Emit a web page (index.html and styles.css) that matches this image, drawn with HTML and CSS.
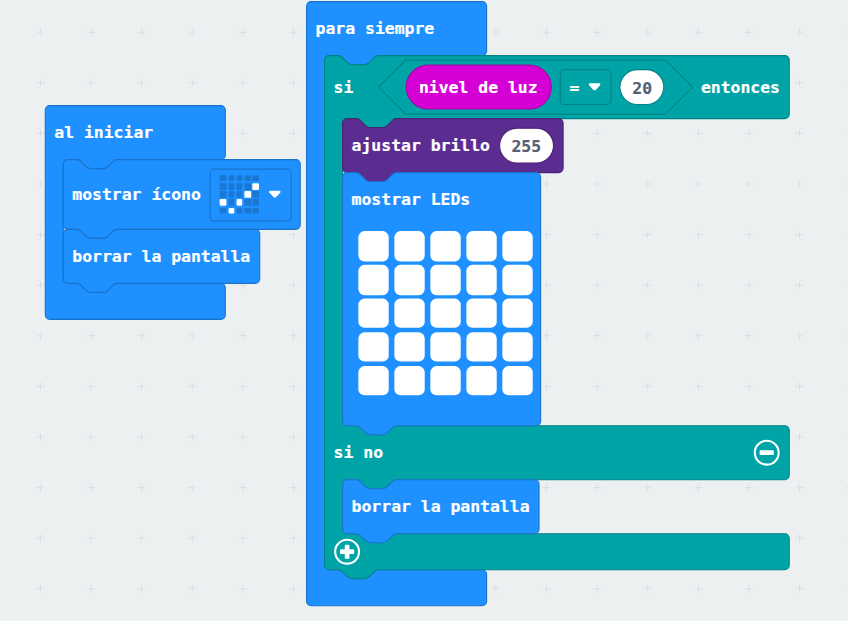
FILE: index.html
```
<!DOCTYPE html>
<html lang="es">
<head>
<meta charset="utf-8">
<title>Bloques</title>
<link rel="stylesheet" href="styles.css">
</head>
<body>
<main class="workspace">
  <svg class="grid" width="848" height="621" aria-hidden="true">
    <defs>
      <pattern id="cross" x="15.2" y="6.9" width="50.6" height="50.6" patternUnits="userSpaceOnUse">
        <path d="M21.3 25.3h8M25.3 21.3v8" stroke="#dcdfe1" stroke-width="1"/>
      </pattern>
    </defs>
    <rect width="848" height="621" fill="url(#cross)"/>
  </svg>

  <section class="script on-start">
    <div class="block blue hat">
      <svg class="shape" width="160" height="190"><path d="M0 4a4 4 0 0 1 4-4H156a4 4 0 0 1 4 4V44a4 4 0 0 1-4 4H64c-2 0-3 1-4 2l-4 4c-1 1-2 2-4 2h-12c-2 0-3-1-4-2l-4-4c-1-1-2-2-4-2h-8a4 4 0 0 0-4 4V154a4 4 0 0 0 4 4H156a4 4 0 0 1 4 4V186a4 4 0 0 1-4 4H4a4 4 0 0 1-4-4z"/></svg>
      <div class="row"><span>al iniciar</span></div>
      <div class="slot">
        <div class="block blue show-icon">
          <svg class="shape" width="211" height="70"><path d="M0 4a4 4 0 0 1 4-4h8c2 0 3 1 4 2l4 4c1 1 2 2 4 2h12c2 0 3-1 4-2l4-4c1-1 2-2 4-2H206.6a4 4 0 0 1 4 4V58a4 4 0 0 1-4 4H48c-2 0-3 1-4 2l-4 4c-1 1-2 2-4 2h-12c-2 0-3-1-4-2l-4-4c-1-1-2-2-4-2h-8a4 4 0 0 1-4-4z"/></svg>
          <div class="row icon-row">
            <span>mostrar ícono</span>
            <div class="dropdown icon-field">
              <div class="mini">
                <i></i><i></i><i></i><i></i><i></i>
                <i></i><i></i><i></i><i></i><i class="on"></i>
                <i></i><i></i><i></i><i class="on"></i><i></i>
                <i class="on"></i><i></i><i class="on"></i><i></i><i></i>
                <i></i><i class="on"></i><i></i><i></i><i></i>
              </div>
              <svg class="arrow" width="12" height="8" viewBox="0 0 12 8"><path d="M1.9.6h8.2c1 0 1.4 1 .7 1.8L7.4 6.1c-.9 1-1.9 1-2.8 0L1.2 2.4C.5 1.6.9.6 1.9.6z"/></svg>
            </div>
          </div>
        </div>
        <div class="block blue">
          <svg class="shape" width="175" height="56"><path d="M0 4a4 4 0 0 1 4-4h8c2 0 3 1 4 2l4 4c1 1 2 2 4 2h12c2 0 3-1 4-2l4-4c1-1 2-2 4-2H170.6a4 4 0 0 1 4 4V44a4 4 0 0 1-4 4H48c-2 0-3 1-4 2l-4 4c-1 1-2 2-4 2h-12c-2 0-3-1-4-2l-4-4c-1-1-2-2-4-2h-8a4 4 0 0 1-4-4z"/></svg>
          <div class="row"><span>borrar la pantalla</span></div>
        </div>
      </div>
      <div class="base"></div>
    </div>
  </section>

  <section class="script forever">
    <div class="block blue hat">
      <svg class="shape" width="160" height="537"><path d="M0 4a4 4 0 0 1 4-4H156a4 4 0 0 1 4 4V44a4 4 0 0 1-4 4H64c-2 0-3 1-4 2l-4 4c-1 1-2 2-4 2h-12c-2 0-3-1-4-2l-4-4c-1-1-2-2-4-2h-8a4 4 0 0 0-4 4V501a4 4 0 0 0 4 4H156a4 4 0 0 1 4 4V533a4 4 0 0 1-4 4H4a4 4 0 0 1-4-4z"/></svg>
      <div class="row"><span>para siempre</span></div>
      <div class="slot">
        <div class="block teal">
          <svg class="shape" width="413" height="465"><path d="M0 4a4 4 0 0 1 4-4h8c2 0 3 1 4 2l4 4c1 1 2 2 4 2h12c2 0 3-1 4-2l4-4c1-1 2-2 4-2H409a4 4 0 0 1 4 4V52a4 4 0 0 1-4 4H64c-2 0-3 1-4 2l-4 4c-1 1-2 2-4 2h-12c-2 0-3-1-4-2l-4-4c-1-1-2-2-4-2h-8a4 4 0 0 0-4 4V325a4 4 0 0 0 4 4H409a4 4 0 0 1 4 4V373a4 4 0 0 1-4 4H64c-2 0-3 1-4 2l-4 4c-1 1-2 2-4 2h-12c-2 0-3-1-4-2l-4-4c-1-1-2-2-4-2h-8a4 4 0 0 0-4 4V421a4 4 0 0 0 4 4H409a4 4 0 0 1 4 4V453a4 4 0 0 1-4 4H48c-2 0-3 1-4 2l-4 4c-1 1-2 2-4 2h-12c-2 0-3-1-4-2l-4-4c-1-1-2-2-4-2h-8a4 4 0 0 1-4-4z"/></svg>
          <div class="row if-row">
            <span class="if-label">si</span>
            <div class="condition">
              <svg class="shape" width="279" height="48"><path d="M24 0H255L279 24L255 48H24L0 24z"/></svg>
              <div class="reporter">nivel de luz</div>
              <div class="dropdown operator"><span>=</span>
                <svg class="arrow" width="12" height="8" viewBox="0 0 12 8"><path d="M1.9.6h8.2c1 0 1.4 1 .7 1.8L7.4 6.1c-.9 1-1.9 1-2.8 0L1.2 2.4C.5 1.6.9.6 1.9.6z"/></svg>
              </div>
              <div class="number teal-edge">20</div>
            </div>
            <span>entonces</span>
          </div>
          <div class="slot">
            <div class="block purple">
              <svg class="shape" width="196" height="56"><path d="M0 4a4 4 0 0 1 4-4h8c2 0 3 1 4 2l4 4c1 1 2 2 4 2h12c2 0 3-1 4-2l4-4c1-1 2-2 4-2H192a4 4 0 0 1 4 4V44a4 4 0 0 1-4 4H48c-2 0-3 1-4 2l-4 4c-1 1-2 2-4 2h-12c-2 0-3-1-4-2l-4-4c-1-1-2-2-4-2h-8a4 4 0 0 1-4-4z"/></svg>
              <div class="row"><span>ajustar brillo</span><div class="number wide">255</div></div>
            </div>
            <div class="block blue show-leds">
              <svg class="shape" width="176" height="233"><path d="M0 4a4 4 0 0 1 4-4h8c2 0 3 1 4 2l4 4c1 1 2 2 4 2h12c2 0 3-1 4-2l4-4c1-1 2-2 4-2H172a4 4 0 0 1 4 4V221a4 4 0 0 1-4 4H48c-2 0-3 1-4 2l-4 4c-1 1-2 2-4 2h-12c-2 0-3-1-4-2l-4-4c-1-1-2-2-4-2h-8a4 4 0 0 1-4-4z"/></svg>
              <div class="row"><span>mostrar LEDs</span></div>
              <div class="leds">
                <i></i><i></i><i></i><i></i><i></i>
                <i></i><i></i><i></i><i></i><i></i>
                <i></i><i></i><i></i><i></i><i></i>
                <i></i><i></i><i></i><i></i><i></i>
                <i></i><i></i><i></i><i></i><i></i>
              </div>
            </div>
          </div>
          <div class="row else-row">
            <span>si no</span>
            <svg class="round-button" width="24" height="24" viewBox="0 0 24 24"><circle cx="12" cy="12" r="10.6"/><rect x="5.7" y="9.9" width="12.6" height="4.2" rx=".8"/></svg>
          </div>
          <div class="slot">
            <div class="block blue">
              <svg class="shape" width="175" height="56"><path d="M0 4a4 4 0 0 1 4-4h8c2 0 3 1 4 2l4 4c1 1 2 2 4 2h12c2 0 3-1 4-2l4-4c1-1 2-2 4-2H170.6a4 4 0 0 1 4 4V44a4 4 0 0 1-4 4H48c-2 0-3 1-4 2l-4 4c-1 1-2 2-4 2h-12c-2 0-3-1-4-2l-4-4c-1-1-2-2-4-2h-8a4 4 0 0 1-4-4z"/></svg>
              <div class="row"><span>borrar la pantalla</span></div>
            </div>
          </div>
          <div class="base">
            <svg class="round-button" width="24" height="24" viewBox="0 0 24 24"><circle cx="12" cy="12" r="10.6"/><path d="M10.6 5.7h2.8q.7 0 .7.7v3.5h3.5q.7 0 .7.7v2.8q0 .7-.7.7h-3.5v3.5q0 .7-.7.7h-2.8q-.7 0-.7-.7v-3.5H6.4q-.7 0-.7-.7v-2.8q0-.7.7-.7h3.5V6.4q0-.7.7-.7z"/></svg>
          </div>
        </div>
      </div>
      <div class="base"></div>
    </div>
  </section>
</main>
</body>
</html>
```
FILE: styles.css
```
* { box-sizing: border-box; }

body {
  margin: 0;
  background: #ecf0f1;
}

.workspace {
  position: relative;
  width: 848px;
  height: 621px;
  overflow: hidden;
  font: bold 14.6px/20px "DejaVu Sans Mono", monospace;
  -webkit-text-stroke: .2px;
  color: #fff;
}

.grid { display: block; }

/* Scripts sit on a free canvas, drawn at the workspace zoom level. */
.script {
  position: absolute;
  left: 0;
  top: 0;
  transform-origin: 0 0;
}
.on-start { transform: translate(45.3px, 105.6px) scale(1.125); }
.forever { transform: translate(306.6px, 1.6px) scale(1.125); }

.block { position: relative; }

.blue { --fill: #1e90ff; --edge: #1873cc; }
.teal { --fill: #00a4a6; --edge: #008385; }
.purple { --fill: #5c2d91; --edge: #4a2474; }

.shape {
  position: absolute;
  left: 0;
  top: 0;
  overflow: visible;
  fill: var(--fill);
  stroke: var(--edge);
  stroke-width: 1;
}

.row {
  position: relative;
  display: flex;
  align-items: center;
  gap: 8px;
  height: 48px;
  padding-left: 8px;
  white-space: pre;
}

.slot { padding-left: 16px; }

.base {
  position: relative;
  display: flex;
  align-items: center;
  height: 32px;
  padding-left: 8px;
}

.icon-row { height: 62px; }

.dropdown {
  display: flex;
  align-items: center;
  border: 1px solid var(--edge);
  border-radius: 4px;
}
.icon-field {
  width: 73px;
  height: 47px;
  margin-left: -.3px;
  padding-left: 8.4px;
  gap: 8.4px;
}
.mini {
  display: grid;
  grid-template-columns: repeat(5, 5.7px);
  grid-auto-rows: 5.7px;
  gap: 1.5px;
}
.mini i { background: #1a77d2; border-radius: 1px; }
.mini .on { background: #fff; }

.arrow { fill: #fff; }

.if-row { height: 56px; }
.if-label { width: 32px; }
.condition {
  position: relative;
  display: flex;
  align-items: center;
  gap: 7.6px;
  width: 279px;
  height: 48px;
  margin-right: -.5px;
  padding-left: 23.6px;
}
.condition > * { position: relative; }
.condition > .shape { position: absolute; }

.reporter {
  width: 130px;
  height: 40px;
  border: 1px solid #aa00aa;
  border-radius: 20px;
  background: #d400d4;
  line-height: 38px;
  text-align: center;
}
.operator {
  width: 45.5px;
  height: 32px;
  padding-left: 7.5px;
  gap: 8px;
}
.number {
  width: 40px;
  height: 32px;
  border: 1px solid #4a2474;
  border-radius: 16px;
  background: #fff;
  color: #575e75;
  line-height: 31px;
  text-align: center;
}
.teal-edge { border-color: #008385; }
.wide { width: 48.5px; }

.show-leds { height: 225px; }
.leds {
  position: relative;
  display: grid;
  grid-template-columns: repeat(5, 26.5px);
  grid-auto-rows: 26.5px;
  gap: 3.4px 5.5px;
  padding: 4.2px 0 0 14.4px;
}
.leds i { border-radius: 5.5px; background: #fff; }

.else-row {
  width: 413px;
  justify-content: space-between;
  padding-right: 8px;
}
.round-button { fill: #fff; }
.round-button circle { fill: none; stroke: #fff; stroke-width: 1.9; }
```
